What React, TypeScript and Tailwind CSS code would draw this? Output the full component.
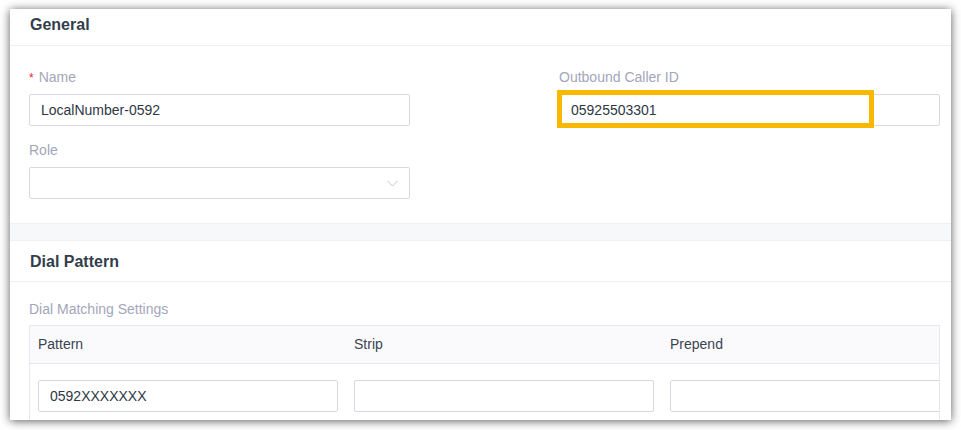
import React from "react";

const font = { fontFamily: '"Liberation Sans", Arial, sans-serif' };

function Label({ children, required }: { children: React.ReactNode; required?: boolean }) {
  return (
    <div className="h-[22px] text-[14px] leading-[22px] text-[#a3a6b9] whitespace-nowrap">
      {required && <span className="text-[#f5222d] mr-[5px] text-[12px]">*</span>}
      {children}
    </div>
  );
}

function Input({ value, className = "" }: { value?: string; className?: string }) {
  return (
    <div
      className={`h-[32px] border border-[#d8dae2] rounded-[2px] bg-white px-[11px] flex items-center text-[14px] text-[#2e3845] whitespace-nowrap ${className}`}
    >
      {value}
    </div>
  );
}

export default function App() {
  return (
    <div className="w-[961px] h-[430px] bg-white pt-[9px] pl-[10px] overflow-hidden" style={font}>
      <div className="w-[941px] h-[411px] bg-white shadow-[0_1px_9px_rgba(0,0,0,0.65)] overflow-hidden flex flex-col">
        {/* General header */}
        <div className="h-[37px] shrink-0 border-b border-[#eef0f4] pl-[20px] pt-[4px]">
          <div className="text-[16px] leading-[24px] font-bold text-[#333d4b]">General</div>
        </div>

        {/* General body */}
        <div className="shrink-0 pt-[20px] pl-[19px] pb-[24px] flex gap-[149px]">
          <div className="w-[381px] flex flex-col">
            <Label required>Name</Label>
            <Input value="LocalNumber-0592" className="mt-[6px]" />
            <div className="mt-[13px]">
              <Label>Role</Label>
            </div>
            <div className="mt-[6px] h-[32px] border border-[#d8dae2] rounded-[2px] bg-white flex items-center justify-end pr-[11px]">
              <svg width="11" height="7" viewBox="0 0 11 7" fill="none">
                <path d="M0.5 0.8 L5.5 6 L10.5 0.8" stroke="#c2c5cf" strokeWidth="1" />
              </svg>
            </div>
          </div>
          <div className="w-[381px] flex flex-col">
            <Label>Outbound Caller ID</Label>
            <div className="relative mt-[6px]">
              <Input value="05925503301" />
              <div className="absolute left-[-2px] top-[-4px] w-[317px] h-[38px] border-[5px] border-[#f8b800]" />
            </div>
          </div>
        </div>

        {/* Gray band */}
        <div className="h-[18px] shrink-0 bg-[#f7f8fa] border-y border-[#eef0f4]" />

        {/* Dial Pattern header */}
        <div className="h-[41px] shrink-0 border-b border-[#eef0f4] pl-[20px] pt-[9px]">
          <div className="text-[16px] leading-[24px] font-bold text-[#333d4b]">Dial Pattern</div>
        </div>

        {/* Dial Pattern body */}
        <div className="pt-[16px] pl-[19px] pr-[11px]">
          <Label>Dial Matching Settings</Label>
          <div className="mt-[5px] border border-[#e6e8ee] overflow-hidden">
            <div className="grid grid-cols-[316px_316px_316px] w-max h-[38px] bg-[#fafafc] border-b border-[#e6e8ee] items-center text-[14px] text-[#3a4350]">
              <div className="pl-[8px]">Pattern</div>
              <div className="pl-[8px]">Strip</div>
              <div className="pl-[8px]">Prepend</div>
            </div>
            <div className="grid grid-cols-[316px_316px_316px] w-max pt-[16px] pb-[16px]">
              <div className="px-[8px]">
                <Input value="0592XXXXXXX" />
              </div>
              <div className="px-[8px]">
                <Input />
              </div>
              <div className="px-[8px]">
                <Input />
              </div>
            </div>
          </div>
        </div>
      </div>
    </div>
  );
}
